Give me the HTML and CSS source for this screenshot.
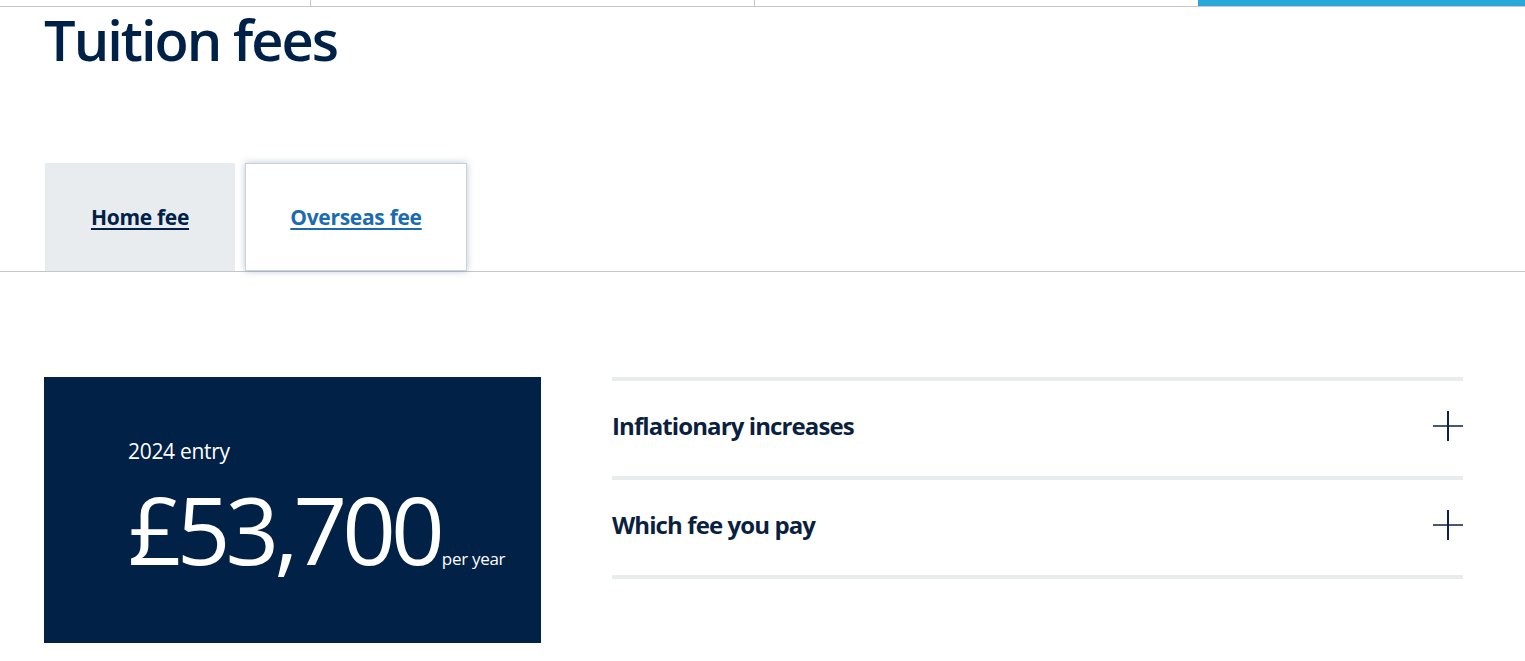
FILE: index.html
```html
<!DOCTYPE html>
<html lang="en">
<head>
    <meta charset="UTF-8">
    <meta name="viewport" content="width=device-width, initial-scale=1.0">
    <title>Tuition fees</title>
    <link rel="stylesheet" href="styles.css">
</head>
<body>
    <nav class="topnav">
        <a class="topnav-item item-first" href="#"></a>
        <a class="topnav-item" href="#"></a>
        <a class="topnav-item" href="#"></a>
        <a class="topnav-item active" href="#"></a>
    </nav>

    <div class="container">
        <h1 class="page-title">Tuition fees</h1>
    </div>

    <div class="fee-tabs">
        <div class="container tabs-row">
            <a class="fee-tab tab-home" href="#">Home fee</a>
            <a class="fee-tab tab-overseas selected" href="#">Overseas fee</a>
        </div>
    </div>

    <div class="container fee-body">
        <div class="fee-box">
            <p class="fee-entry">2024 entry</p>
            <p class="fee-amount">£53,700<span class="fee-unit">per year</span></p>
        </div>

        <div class="accordion">
            <div class="acc-item">
                <h3>Inflationary increases</h3>
                <svg class="acc-icon" width="30" height="30" viewBox="0 0 30 30">
                    <line x1="0" y1="15" x2="30" y2="15" stroke="#0b2145" stroke-width="1.5"/>
                    <line x1="15" y1="0" x2="15" y2="30" stroke="#0b2145" stroke-width="2"/>
                </svg>
            </div>
            <div class="acc-item">
                <h3>Which fee you pay</h3>
                <svg class="acc-icon" width="30" height="30" viewBox="0 0 30 30">
                    <line x1="0" y1="15" x2="30" y2="15" stroke="#0b2145" stroke-width="1.5"/>
                    <line x1="15" y1="0" x2="15" y2="30" stroke="#0b2145" stroke-width="2"/>
                </svg>
            </div>
        </div>
    </div>
</body>
</html>
```

FILE: styles.css
```css
*{
    margin: 0;
    padding: 0;
    box-sizing: border-box;
}
body{
    font-family: 'Open Sans', sans-serif;
    color: #002147;
    background: #fff;
}
.container{
    padding-left: 44px;
    padding-right: 62px;
}

/* top navigation, mostly scrolled off */
.topnav{
    display: flex;
    height: 7px;
    border-bottom: 1px solid #c3c7cb;
}
.topnav-item{
    width: 444px;
    border-left: 1px solid #c3c7cb;
}
.topnav-item.item-first{
    width: 310px;
    border-left: none;
}
.topnav-item.active{
    flex: 1;
    background: #27a8d8;
    border-left: none;
}

.page-title{
    font-size: 56px;
    font-weight: 600;
    letter-spacing: -2px;
    line-height: 64px;
    margin-top: 0;
    color: #002147;
}

/* fee tabs */
.fee-tabs{
    margin-top: 92px;
    border-bottom: 1px solid #c3c7cb;
}
.tabs-row{
    display: flex;
    gap: 10px;
    padding-left: 45px;
}
.fee-tab{
    display: flex;
    align-items: center;
    justify-content: center;
    height: 108px;
    background: #e9ecee;
    color: #002147;
    font-size: 21px;
    font-weight: 700;
    letter-spacing: -0.3px;
    text-underline-offset: 3px;
    text-decoration-thickness: 2px;
}
.tab-home{
    width: 190px;
}
.tab-overseas{
    width: 222px;
}
.fee-tab.selected{
    background: #fff;
    color: #1b6cae;
    border: 1px solid #c9d1da;
    box-shadow: 0 0 7px rgba(60, 90, 130, .35);
}

/* fee body */
.fee-body{
    display: flex;
    gap: 71px;
    margin-top: 105px;
}
.fee-box{
    width: 497px;
    height: 266px;
    background: #022147;
    color: #fff;
    padding: 64px 0 0 84px;
}
.fee-entry{
    font-size: 21px;
    letter-spacing: -0.3px;
    line-height: 20px;
}
.fee-amount{
    font-size: 94px;
    font-weight: 400;
    letter-spacing: -5px;
    line-height: 100px;
    margin-top: 18px;
}
.fee-unit{
    font-size: 17px;
    letter-spacing: -0.3px;
    margin-left: 2px;
}

.accordion{
    flex: 1;
    border-top: 4px solid #e9ecec;
}
.acc-item{
    display: flex;
    align-items: center;
    justify-content: space-between;
    height: 99px;
    padding-bottom: 6px;
    border-bottom: 4px solid #e9ecec;
}
.acc-item h3{
    font-size: 24px;
    font-weight: 700;
    letter-spacing: -0.9px;
    color: #0b1f3f;
}
```
